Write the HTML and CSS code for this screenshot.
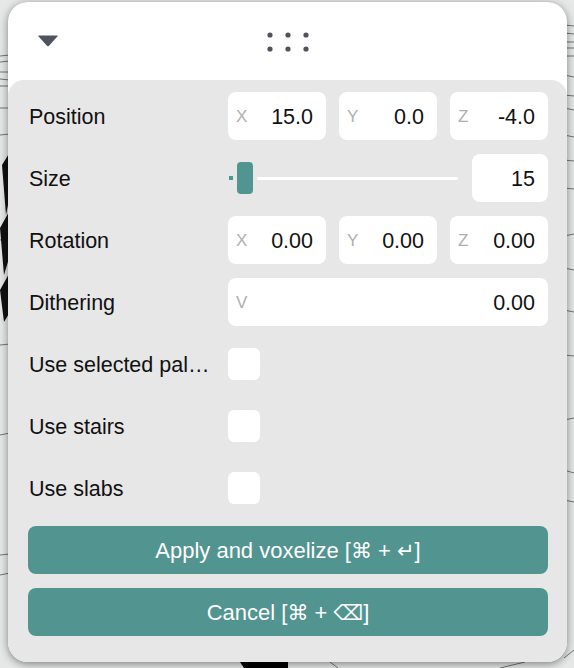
FILE: index.html
```html
<!DOCTYPE html>
<html>
<head>
<meta charset="utf-8">
<link rel="stylesheet" href="styles.css">
</head>
<body>
<svg class="canvas" width="574" height="668" viewBox="0 0 574 668">
  <g stroke="#555" stroke-width="0.8" fill="none">
    <path d="M0 56 L10 55"/><path d="M0 62 L10 61"/><path d="M0 72 L10 72"/><path d="M0 79 L10 80"/>
    <path d="M0 86 L10 86"/><path d="M0 108 L10 108"/><path d="M0 135 L10 134"/><path d="M0 240 L10 238"/>
    <path d="M0 345 L10 344"/><path d="M0 435 L10 433"/><path d="M0 555 L10 554"/><path d="M0 575 L10 573"/>
    <path d="M564 25 L574 26"/><path d="M564 33 L574 34"/><path d="M564 42 L574 42"/><path d="M564 48 L574 48"/>
    <path d="M564 56 L574 56"/><path d="M564 75 L574 77"/><path d="M564 95 L574 96"/><path d="M564 108 L574 110"/>
    <path d="M564 135 L574 137"/><path d="M564 160 L574 161"/><path d="M564 188 L574 189"/><path d="M564 236 L574 234"/>
    <path d="M564 268 L574 270"/><path d="M564 310 L574 312"/><path d="M564 355 L574 356"/><path d="M564 420 L574 418"/>
    <path d="M564 470 L574 473"/><path d="M564 500 L574 502"/><path d="M564 658 L574 650"/>
    <path d="M330 662 L338 668"/><path d="M500 668 L525 662"/>
  </g>
  <path d="M2 165 L10 152 L10 195 L6 215 Z M0 228 L10 210 L10 255 L4 275 Z M0 290 L10 272 L10 312 L4 322 Z" fill="#111"/>
  <path d="M240 662 L288 662 L288 668 L244 668 Z" fill="#000"/>
</svg>
<div class="panel">
  <div class="header">
    <svg class="caret" width="22" height="14" viewBox="0 0 22 14"><path d="M2 1.5 H20 Q21.3 1.5 20.4 2.5 L12 11.8 Q11 12.8 10 11.8 L1.6 2.5 Q0.7 1.5 2 1.5 Z" fill="#4f535c"/></svg>
    <svg class="grip" width="42" height="20" viewBox="0 0 42 20">
      <g fill="#4f535c">
        <circle cx="3" cy="3" r="2.6"/><circle cx="21" cy="3" r="2.6"/><circle cx="39" cy="3" r="2.6"/>
        <circle cx="3" cy="17" r="2.6"/><circle cx="21" cy="17" r="2.6"/><circle cx="39" cy="17" r="2.6"/>
      </g>
    </svg>
  </div>
  <div class="body">
    <div class="row">
      <div class="label">Position</div>
      <div class="triple">
        <div class="field"><span class="axis">X</span><span class="val">15.0</span></div>
        <div class="field"><span class="axis">Y</span><span class="val">0.0</span></div>
        <div class="field"><span class="axis">Z</span><span class="val">-4.0</span></div>
      </div>
    </div>
    <div class="row">
      <div class="label">Size</div>
      <div class="slider-wrap">
        <div class="slider">
          <span class="fill"></span>
          <span class="thumb"></span>
          <span class="track"></span>
        </div>
        <div class="field small"><span class="val">15</span></div>
      </div>
    </div>
    <div class="row">
      <div class="label">Rotation</div>
      <div class="triple">
        <div class="field"><span class="axis">X</span><span class="val">0.00</span></div>
        <div class="field"><span class="axis">Y</span><span class="val">0.00</span></div>
        <div class="field"><span class="axis">Z</span><span class="val">0.00</span></div>
      </div>
    </div>
    <div class="row">
      <div class="label">Dithering</div>
      <div class="field"><span class="axis">V</span><span class="val">0.00</span></div>
    </div>
    <div class="row">
      <div class="label">Use selected pal…</div>
      <div class="check"></div>
    </div>
    <div class="row">
      <div class="label">Use stairs</div>
      <div class="check"></div>
    </div>
    <div class="row">
      <div class="label">Use slabs</div>
      <div class="check"></div>
    </div>
    <button class="btn"><span class="btn-text">Apply and voxelize [<span class="sym">⌘</span> + <span class="sym">↵</span>]</span></button>
    <button class="btn"><span class="btn-text">Cancel [<span class="sym">⌘</span> + <span class="sym">⌫</span>]</span></button>
  </div>
</div>
</body>
</html>
```
FILE: styles.css
```css
html, body {
  margin: 0;
  padding: 0;
}
body {
  width: 574px;
  height: 668px;
  background: #e6e8e8;
  position: relative;
  overflow: hidden;
  font-family: "Liberation Sans", Arial, sans-serif;
  color: #111;
}
.canvas {
  position: absolute;
  left: 0;
  top: 0;
}
.panel {
  position: relative;
  margin: 2px 0 0 8px;
  width: 559px;
  height: 660px;
  background: #fff;
  border-radius: 20px;
  box-shadow: 0 2px 8px rgba(0, 0, 0, 0.45);
  display: flex;
  flex-direction: column;
}
.header {
  height: 78px;
  position: relative;
  display: flex;
  align-items: center;
  justify-content: center;
}
.caret {
  position: absolute;
  left: 29px;
  top: 32px;
}
.grip {
  margin-top: 2px;
}
.body {
  flex: 1;
  background: #e7e7e7;
  border-radius: 16px 16px 20px 20px;
  padding: 12px 19px 26px 20px;
  display: flex;
  flex-direction: column;
  gap: 14px;
}
.row {
  height: 48px;
  display: grid;
  grid-template-columns: 186px 1fr;
  column-gap: 14px;
  align-items: center;
}
.label {
  font-size: 21.5px;
  padding-left: 1px;
  padding-top: 2px;
  white-space: nowrap;
}
.triple {
  display: grid;
  grid-template-columns: 1fr 1fr 1fr;
  column-gap: 13px;
  height: 48px;
}
.field {
  height: 48px;
  background: #fff;
  border-radius: 8px;
  display: flex;
  align-items: center;
  justify-content: space-between;
  padding: 0 13px 0 8px;
  box-sizing: border-box;
}
.field.small {
  width: 76px;
  justify-content: flex-end;
}
.axis {
  font-size: 17px;
  color: #b0b0b0;
  padding-top: 1px;
}
.val {
  font-size: 21.5px;
  color: #111;
  padding-top: 2px;
}
.slider-wrap {
  display: flex;
  align-items: center;
  gap: 14px;
  height: 48px;
}
.slider {
  flex: 1;
  height: 32px;
  display: flex;
  align-items: center;
}
.fill {
  width: 4px;
  height: 4px;
  background: #519490;
  margin-left: 1px;
}
.thumb {
  width: 16px;
  height: 32px;
  border-radius: 4px;
  background: #519490;
  margin-left: 4px;
}
.track {
  flex: 1;
  height: 3px;
  background: #fff;
  margin-left: 4px;
  border-radius: 2px;
}
.check {
  width: 32px;
  height: 32px;
  border-radius: 6px;
  background: #fff;
}
.btn {
  height: 48px;
  border: none;
  border-radius: 8px;
  background: #519490;
  color: #fff;
  font-family: "Liberation Sans", Arial, sans-serif;
  font-size: 22px;
  padding: 0;
  margin: 0;
  display: flex;
  align-items: center;
  justify-content: center;
}
.btn-text {
  white-space: pre;
  padding-top: 1px;
}
.sym {
  font-family: "DejaVu Sans", sans-serif;
  font-size: 21px;
}
```
